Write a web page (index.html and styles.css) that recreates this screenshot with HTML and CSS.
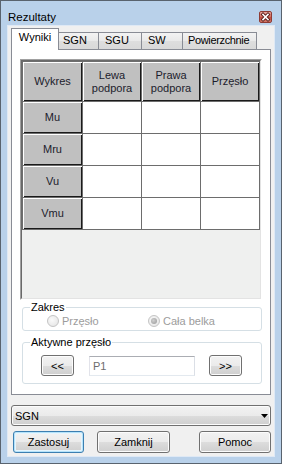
FILE: index.html
```html
<!DOCTYPE html>
<html lang="pl">
<head>
    <meta charset="UTF-8">
    <title>Rezultaty</title>
    <link rel="stylesheet" href="styles.css">
</head>
<body>
    <div class="window">
      <div class="titlebar">
        <span class="title">Rezultaty</span>
        <span class="close-btn">
          <svg width="11" height="10" viewBox="0 0 11 10">
            <path d="M3 2.5 L8 7.5 M8 2.5 L3 7.5" stroke="#5a1d18" stroke-width="3.4" stroke-linecap="square"/>
            <path d="M3 2.5 L8 7.5 M8 2.5 L3 7.5" stroke="#fff" stroke-width="1.6" stroke-linecap="square"/>
          </svg>
        </span>
      </div>

      <div class="client">
        <div class="tabs">
          <div class="tab active">Wyniki</div>
          <div class="tab tab-sgn">SGN</div>
          <div class="tab tab-sgu">SGU</div>
          <div class="tab tab-sw">SW</div>
          <div class="tab tab-pow">Powierzchnie</div>
        </div>

        <div class="tab-page">
          <div class="grid-frame">
            <div class="grid-inner">
              <div class="grid">
                <div class="hcell">Wykres</div>
                <div class="hcell">Lewa<br>podpora</div>
                <div class="hcell">Prawa<br>podpora</div>
                <div class="hcell">Przęsło</div>

                <div class="hcell">Mu</div>
                <div class="cell"></div><div class="cell"></div><div class="cell"></div>
                <div class="hcell">Mru</div>
                <div class="cell"></div><div class="cell"></div><div class="cell"></div>
                <div class="hcell">Vu</div>
                <div class="cell"></div><div class="cell"></div><div class="cell"></div>
                <div class="hcell">Vmu</div>
                <div class="cell"></div><div class="cell"></div><div class="cell"></div>
              </div>
            </div>
          </div>

          <fieldset class="group group-range">
            <legend>Zakres</legend>
            <div class="radio-row">
              <label class="radio-item radio-first"><span class="radio"></span>Przęsło</label>
              <label class="radio-item"><span class="radio checked"></span>Cała belka</label>
            </div>
          </fieldset>

          <fieldset class="group group-span">
            <legend>Aktywne przęsło</legend>
            <div class="span-row">
              <button class="btn btn-small">&lt;&lt;</button>
              <div class="textbox">P1</div>
              <button class="btn btn-small btn-next">&gt;&gt;</button>
            </div>
          </fieldset>
        </div>

        <div class="combo">
          <span>SGN</span>
          <svg class="combo-arrow" width="7" height="4" viewBox="0 0 7 4"><path d="M0 0 H7 L3.5 4 Z" fill="#000"/></svg>
        </div>

        <div class="buttons">
          <button class="btn btn-apply btn-default">Zastosuj</button>
          <button class="btn btn-close">Zamknij</button>
          <button class="btn btn-help">Pomoc</button>
        </div>
      </div>
    </div>
</body>
</html>
```

FILE: styles.css
```css
* {
  box-sizing: border-box;
}

body {
  margin: 0;
  font-family: "Liberation Sans", Arial, sans-serif;
  font-size: 11px;
  color: #000;
}

/* window frame */
.window {
  width: 282px;
  height: 464px;
  border: 1px solid #59636e;
  background: #b9d1ea;
  padding: 0 6px 6px;
  display: flex;
  flex-direction: column;
}
.titlebar {
  height: 24px;
  flex: none;
  display: flex;
  justify-content: space-between;
  align-items: flex-start;
  padding: 9px 3px 0 1px;
}
.title {
  font-size: 11.5px;
  line-height: 14px;
}
.close-btn {
  width: 13px;
  height: 12px;
  margin-top: 1px;
  border: 1px solid #8e3b33;
  border-radius: 2px;
  background: linear-gradient(#e8a99f, #d0675b 50%, #c14a3d 51%, #d37a6c);
  display: flex;
  align-items: center;
  justify-content: center;
}

.client {
  flex: 1;
  border: 1px solid #dfe9f5;
  background: #f0f0f0;
  padding: 2px 3px 0 3px;
  display: flex;
  flex-direction: column;
}

/* tabs */
.tabs {
  height: 21px;
  flex: none;
  display: flex;
  align-items: flex-end;
}
.tab {
  height: 17px;
  border-top: 1px solid #898c95;
  border-right: 1px solid #898c95;
  background: linear-gradient(#f3f3f3, #e9e9e9 50%, #dedede 50%, #d9d9d9);
  line-height: 14px;
  padding-left: 6px;
  white-space: nowrap;
  overflow: hidden;
}
.tab.active {
  width: 48px;
  height: 22px;
  margin-bottom: -1px;
  border: 1px solid #898c95;
  border-bottom: none;
  background: #fff;
  padding: 2px 0 0;
  line-height: 13px;
  text-align: center;
  position: relative;
  z-index: 1;
}
.tab-sgn {
  width: 40px;
  padding-left: 4px;
}
.tab-sgu {
  width: 43px;
}
.tab-sw {
  width: 41px;
}
.tab-pow {
  width: 74px;
  padding-left: 5px;
  letter-spacing: -0.35px;
}

.tab-page {
  height: 346px;
  flex: none;
  border: 1px solid #898c95;
  background: #fff;
  padding: 9px 8px 0 8px;
  display: flex;
  flex-direction: column;
}

/* data grid */
.grid-frame {
  height: 241px;
  flex: none;
  border: 1px solid;
  border-color: #a0a0a0 #fff #fff #a0a0a0;
}
.grid-inner {
  height: 100%;
  border: 1px solid;
  border-color: #696969 #e3e3e3 #e3e3e3 #696969;
  background: #eff0ef;
}
.grid {
  width: 238px;
  display: grid;
  grid-template-columns: 60px 59px 59px 59px;
  grid-template-rows: 40px repeat(4, 32px);
  border-left: 1px solid #6d6d6d;
  border-top: 1px solid #6d6d6d;
}
.hcell,
.cell {
  border-right: 1px solid #6d6d6d;
  border-bottom: 1px solid #6d6d6d;
}
.hcell {
  background: #c0c0c0;
  box-shadow: inset 1px 1px #fff, inset -1px -1px #1a1a1a;
  color: #1c1c2c;
  line-height: 13px;
  text-align: center;
  display: flex;
  align-items: center;
  justify-content: center;
}
.cell {
  background: #fff;
}

/* group boxes */
.group {
  margin: 0 0 0 2px;
  padding: 0;
  border: 1px solid #d5dfe5;
  border-radius: 3px;
  min-width: 0;
}
.group legend {
  margin-left: 7px;
  padding: 0 1px;
  line-height: 13px;
}
.group-range {
  margin-top: 1px;
}
.group-span {
  margin-top: 5px;
}

.radio-row {
  height: 14px;
  margin-bottom: 2px;
  padding-left: 24px;
  display: flex;
  align-items: center;
  color: #9c9c9c;
}
.radio-item {
  display: flex;
  align-items: center;
  gap: 3px;
}
.radio-first {
  width: 101px;
}
.radio {
  width: 12px;
  height: 12px;
  border-radius: 50%;
  border: 1px solid #c4c4c4;
  background: radial-gradient(circle at 40% 40%, #fafafa, #e2e2e2);
  display: flex;
  align-items: center;
  justify-content: center;
}
.radio.checked::after {
  content: "";
  width: 6px;
  height: 6px;
  border-radius: 50%;
  background: radial-gradient(circle at 40% 40%, #cfcfcf, #979797);
}

.span-row {
  padding: 6px 0 7px 18px;
  display: flex;
  align-items: center;
}
.textbox {
  width: 106px;
  height: 20px;
  margin-left: 15px;
  border: 1px solid;
  border-color: #abadb3 #dbdfe6 #e3e9ef #e2e3ea;
  background: #fff;
  padding-left: 3px;
  line-height: 18px;
  color: #6d6d6d;
}

/* buttons */
.btn {
  font: inherit;
  color: #000;
  height: 22px;
  padding: 0;
  border: 1px solid #707070;
  border-radius: 3px;
  background: linear-gradient(#f2f2f2, #ebebeb 50%, #dddddd 50%, #cfcfcf);
  box-shadow: inset 0 0 0 1px #fcfcfc;
}
.btn-default {
  border-color: #3c7fb1;
  box-shadow: inset 0 0 0 1px #b6e3fa, inset 0 0 0 2px #e6f5fd;
}
.btn-small {
  width: 33px;
  height: 21px;
}
.btn-next {
  margin-left: 14px;
}

.combo {
  height: 21px;
  width: 260px;
  flex: none;
  margin-top: 10px;
  padding: 0 2px 0 3px;
  border: 1px solid #707070;
  border-radius: 3px;
  background: linear-gradient(#f2f2f2, #ebebeb 50%, #dddddd 50%, #cfcfcf);
  box-shadow: inset 0 0 0 1px #fcfcfc;
  display: flex;
  align-items: center;
  justify-content: space-between;
}

.buttons {
  margin-top: 5px;
  display: flex;
}
.btn-apply {
  width: 71px;
  margin-left: 2px;
}
.btn-close {
  width: 73px;
  margin-left: 13px;
}
.btn-help {
  width: 72px;
  margin-left: 29px;
}
```
